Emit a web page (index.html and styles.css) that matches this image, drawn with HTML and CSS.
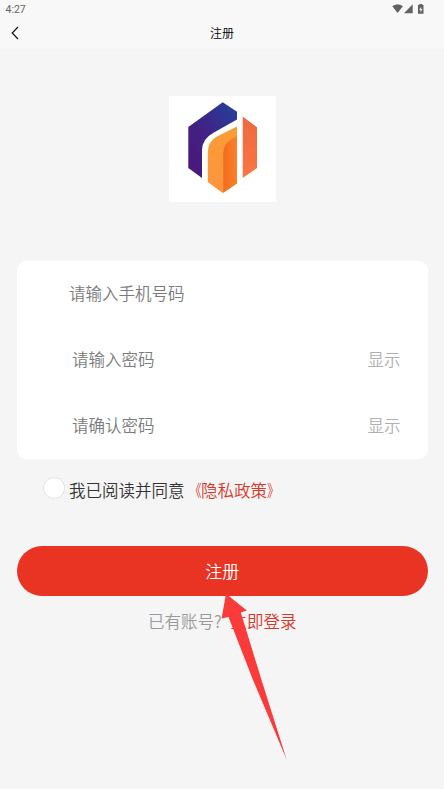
FILE: index.html
```html
<!DOCTYPE html>
<html lang="zh-CN">
<head>
<meta charset="utf-8">
<meta name="viewport" content="width=device-width, initial-scale=1">
<title>注册</title>
<link rel="stylesheet" href="styles.css">
</head>
<body>
<div class="screen">
  <header class="top">
    <div class="status">
      <span class="clock">4:27</span>
      <svg class="status-icons" width="34" height="12" viewBox="0 0 34 12" fill="#626262">
        <path d="M.3 2.2C3.2-.2 8-.2 10.900 2.200L5.600 9z"/>
        <path d="M20.700.2V9.300H12z"/>
        <path d="M27.300 0h3v1h1.200v8.700h-5.500V1h1.300z"/>
        <path d="M29.200 2.800l-2 3.100h1.300v2.500l2-3.400h-1.300z" fill="#f0f0f0"/>
      </svg>
    </div>
    <nav class="nav">
      <svg class="back" width="8" height="14" viewBox="0 0 8 14" fill="none" stroke="#111" stroke-width="1.200"><path d="M7 1L1.200 7 7 13"/></svg>
      <h1 class="title">注册</h1>
    </nav>
  </header>
  <main class="main">
    <div class="logo">
      <svg width="107" height="106" viewBox="0 0 107 106">
        <defs>
          <linearGradient id="blue" x1="0" y1="1" x2="1" y2="0"><stop offset="0" stop-color="#4b1678"/><stop offset=".45" stop-color="#432084"/><stop offset="1" stop-color="#20439b"/></linearGradient>
          <linearGradient id="amber" x1="0" y1="0" x2="0" y2="1"><stop offset="0" stop-color="#f99c35"/><stop offset="1" stop-color="#ff9440"/></linearGradient>
          <linearGradient id="orange" x1="0" y1="0" x2="1" y2="0"><stop offset="0" stop-color="#f36d1b"/><stop offset="1" stop-color="#f9812c"/></linearGradient>
          <linearGradient id="coral" x1="0" y1="0" x2="0" y2="1"><stop offset="0" stop-color="#ed6942"/><stop offset="1" stop-color="#fb7643"/></linearGradient>
        </defs>
        <path fill="url(#blue)" d="M53.700 6.200L68 15.800V23.500L44.500 36.700Q33 43 33 54V82L19.300 72V31z"/>
        <path fill="url(#amber)" d="M68 30.500V87.500L53.700 97 38.800 86V56Q38.800 45.500 48 40.500z"/>
        <path fill="url(#orange)" d="M68 40V87.500L54.300 96.700V57Q54.300 48.500 62 43.500z"/>
        <path fill="url(#coral)" d="M73.700 20.500L88 31.200V72L73.700 82z"/>
      </svg>
    </div>
    <form class="form">
      <div class="card">
        <div class="row row-phone"><span class="hint">请输入手机号码</span></div>
        <div class="row"><span class="hint">请输入密码</span><span class="show">显示</span></div>
        <div class="row"><span class="hint">请确认密码</span><span class="show">显示</span></div>
      </div>
      <div class="agree">
        <span class="radio"></span>
        <span class="agree-text">我已阅读并同意<a class="link policy"><span class="mark mark-open">《</span>隐私政策<span class="mark">》</span></a></span>
      </div>
      <button class="submit" type="button">注册</button>
      <p class="login"><span>已有账号?</span><a class="link">立即登录</a></p>
    </form>
  </main>
  <svg class="pointer" width="68" height="168" viewBox="0 0 68 168"><path fill="#fb3a3a" d="M6 .8L26.800 17.500 20.800 19.500 41.500 87 66.700 166.700 33 87 8.500 24 1.600 25.500z"/></svg>
</div>
</body>
</html>
```
FILE: styles.css
```css
* { box-sizing: border-box; }

body {
  margin: 0;
  background: #f5f5f5;
  font-family: "Noto Sans CJK SC", sans-serif;
  font-weight: 350;
}

.screen {
  position: relative;
  height: 789px;
  overflow: hidden;
}

.top {
  height: 49px;
  background: #f8f8f8;
}

.status {
  display: flex;
  justify-content: space-between;
  height: 17px;
  padding: 4px 18px 0 5.500px;
}

.clock {
  font: 400 10.500px/11px Roboto, sans-serif;
  color: #636363;
}

.status-icons { display: block; }

.nav {
  display: flex;
  align-items: center;
  height: 32px;
  padding: 0 11px;
}

.title {
  flex: 1;
  margin: 0 8px 1px 0;
  font-size: 12px;
  line-height: 18px;
  font-weight: 350;
  text-align: center;
  color: #000;
}

.main { padding: 47px 16.500px 0 17px; }

.logo {
  width: 107px;
  height: 106px;
  margin: 0 auto 59px;
  background: #fff;
}

.logo svg { display: block; }

.form {
  font-size: 16.500px;
  line-height: 24px;
}

.card {
  border-radius: 9px;
  background: #fff;
}

.row {
  display: flex;
  align-items: center;
  justify-content: space-between;
  height: 66px;
  padding: 0 27px 2px 55px;
}

.row-phone { padding-left: 52px; }

.hint { color: #7b7b7b; }

.show { color: #b0b0b0; }

.agree {
  display: flex;
  gap: 4px;
  height: 87px;
  padding: 18px 0 0 26px;
  color: #333;
}

.radio {
  width: 22px;
  height: 22px;
  border: 1px solid #e2e2e2;
  border-radius: 50%;
  background: #fff;
}

.agree-text { margin-top: 1px; }

.link { color: #d8382c; }

.mark {
  display: inline-block;
  width: 16.500px;
  transform: scaleX(.75);
  transform-origin: left;
}

.mark-open { transform-origin: right; }

.submit {
  display: block;
  width: 100%;
  height: 50px;
  padding: 0 0 1px;
  border: 0;
  border-radius: 25px;
  background: #e93323;
  color: #fff;
  font: inherit;
  font-size: 17px;
}

.login {
  display: flex;
  justify-content: center;
  gap: 9px;
  margin: 13px 0 0;
  color: #999;
}

.pointer {
  position: absolute;
  left: 220px;
  top: 593px;
}
```
